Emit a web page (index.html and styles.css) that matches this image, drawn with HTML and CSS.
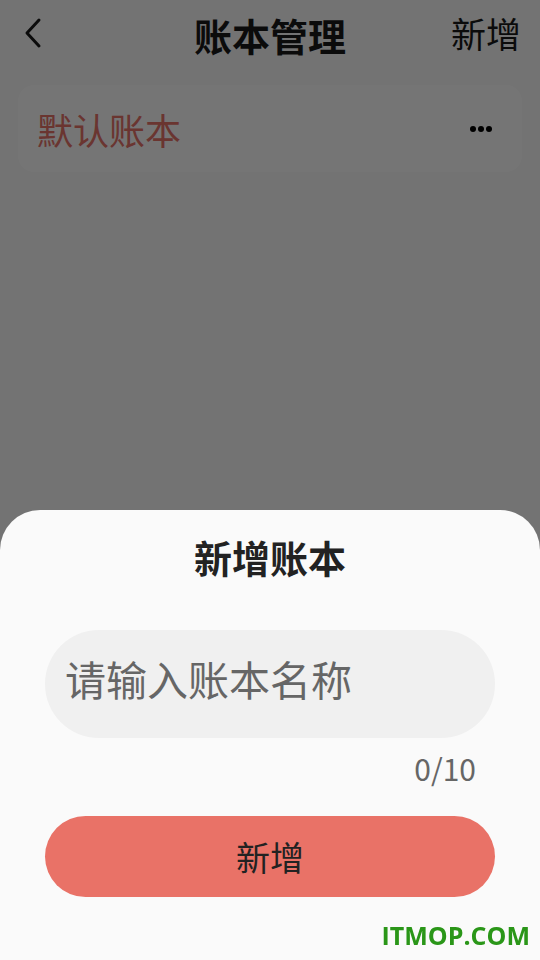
FILE: index.html
```html
<!DOCTYPE html>
<html lang="zh-CN">
<head>
    <meta charset="UTF-8">
    <meta name="viewport" content="width=device-width, initial-scale=1.0">
    <title>账本管理</title>
    <link rel="stylesheet" href="styles.css">
</head>
<body>
    <div class="page">
        <header class="top-bar">
            <button class="back" aria-label="返回">
                <svg width="24" height="32" viewBox="0 0 24 32">
                    <polyline points="17,3 5,16 17,29" fill="none" stroke="#1a1a1a" stroke-width="3" stroke-linecap="round" stroke-linejoin="round"/>
                </svg>
            </button>
            <h1>账本管理</h1>
            <span class="top-action">新增</span>
        </header>

        <div class="book-list">
            <div class="book-item">
                <span class="book-name">默认账本</span>
                <span class="more"><i></i><i></i><i></i></span>
            </div>
        </div>
    </div>

    <div class="mask"></div>

    <div class="sheet">
        <h2>新增账本</h2>
        <div class="name-box">
            <input type="text" placeholder="请输入账本名称" maxlength="10">
        </div>
        <div class="counter">0/10</div>
        <button class="submit">新增</button>
    </div>

    <div class="watermark">ITMOP.COM</div>
</body>
</html>
```

FILE: styles.css
```css
body {
    margin: 0;
    padding: 0;
    background-color: #fafafa;
    font-family: "Noto Sans CJK SC", "Noto Sans", sans-serif;
    color: #1a1a1a;
}

.page {
    height: 960px;
}

.top-bar {
    height: 66px;
    display: flex;
    align-items: center;
    justify-content: space-between;
    padding: 0 19px 0 22px;
    position: relative;
}

.back {
    border: none;
    background: none;
    padding: 0;
    width: 30px;
    height: 32px;
    display: flex;
    align-items: center;
}

.top-bar h1 {
    margin: 0;
    font-size: 38px;
    font-weight: bold;
    position: absolute;
    left: 0;
    right: 0;
    text-align: center;
    pointer-events: none;
    line-height: 66px;
    top: 2px;
}

.top-action {
    font-size: 35px;
    margin-top: -2px;
    color: #1a1a1a;
}

.book-list {
    padding: 19px 18px;
}

.book-item {
    height: 87px;
    background-color: #ffffff;
    border-radius: 16px;
    display: flex;
    align-items: center;
    justify-content: space-between;
    padding: 0 30px 0 19px;
}

.book-name {
    font-size: 36px;
    color: #e8736a;
}

.more {
    display: flex;
    gap: 2px;
}

.more i {
    width: 6px;
    height: 6px;
    border-radius: 50%;
    background-color: #000;
}

.mask {
    position: fixed;
    inset: 0;
    background-color: rgba(0, 0, 0, 0.54);
}

.sheet {
    position: fixed;
    left: 0;
    right: 0;
    bottom: 0;
    height: 450px;
    background-color: #fafafa;
    border-radius: 40px 40px 0 0;
    padding: 22px 45px 0;
    box-sizing: border-box;
    display: flex;
    flex-direction: column;
}

.sheet h2 {
    margin: 0;
    font-size: 38px;
    line-height: 50px;
    text-align: center;
    color: #222;
}

.name-box {
    margin-top: 48px;
    height: 108px;
    border-radius: 54px;
    background-color: #f0f0f0;
    display: flex;
    align-items: center;
    padding: 0 20px 12px;
    box-sizing: border-box;
}

.name-box input {
    width: 100%;
    border: none;
    background: none;
    outline: none;
    font-family: inherit;
    font-size: 41px;
    color: #1a1a1a;
    padding: 0;
}

.name-box input::placeholder {
    color: #666;
}

.counter {
    margin-top: 10px;
    text-align: right;
    padding-right: 19px;
    font-size: 30px;
    line-height: 40px;
    color: #666;
}

.submit {
    margin-top: 28px;
    height: 81px;
    border: none;
    border-radius: 41px;
    background-color: #e97267;
    font-family: inherit;
    font-size: 34px;
    color: #222;
}

.watermark {
    position: fixed;
    right: 10px;
    bottom: 8px;
    font-family: "Open Sans", "Liberation Sans", sans-serif;
    font-weight: bold;
    font-size: 25px;
    color: #2a9618;
}
```
